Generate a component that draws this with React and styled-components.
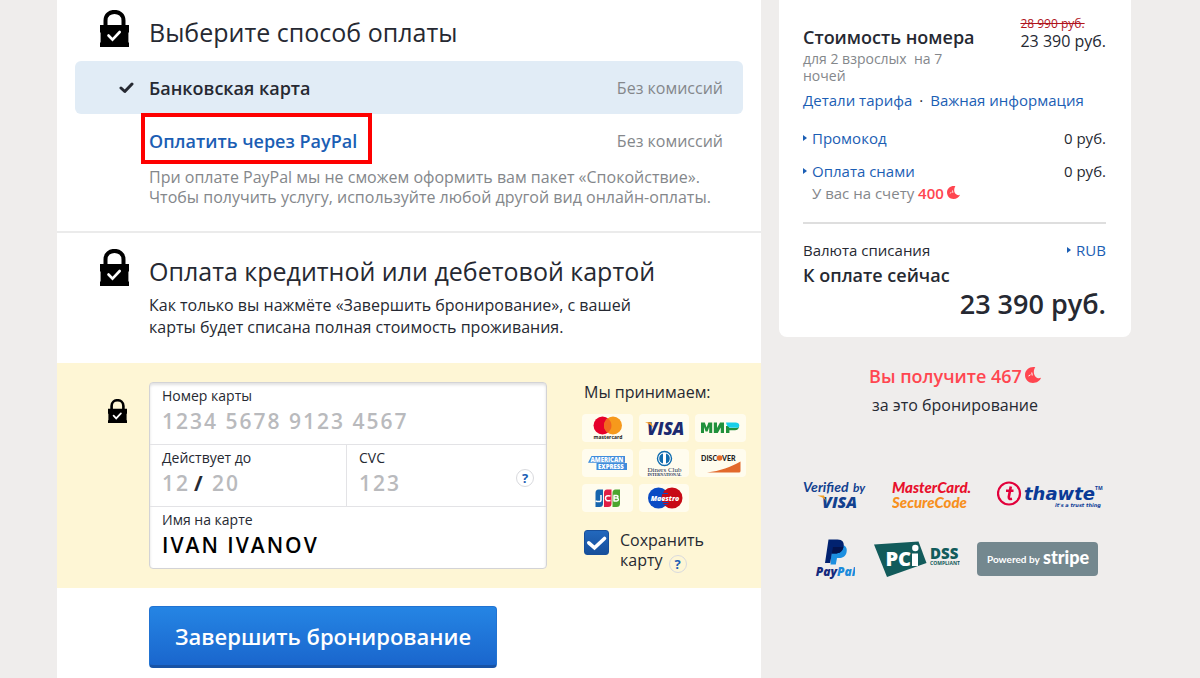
import React, { useState } from "react";
import styled, { createGlobalStyle } from "styled-components";

const GlobalStyle = createGlobalStyle`
  * {
    box-sizing: border-box;
  }

  body {
    margin: 0;
    background: #efedec;
    color: #262932;
    font-family: "Open Sans", "Noto Sans", sans-serif;
    font-size: 16px;
    line-height: 20px;
  }

  h2,
  h3,
  p {
    margin: 0;
  }

  a {
    color: #1b5eb4;
    text-decoration: none;
  }
`;

const brands = [
  "mastercard",
  "visa",
  "mir",
  "amex",
  "diners",
  "discover",
  "jcb",
  "maestro"
];

const App = () => {
  const [saveCard, setSaveCard] = useState(true);

  return (
    <>
      <GlobalStyle />
      <Page>
        <Main>
          <Section top={10} bottom={24}>
            <SectionHead>
              <LockIcon size={29} />
              <Title>Выберите способ оплаты</Title>
            </SectionHead>
            <Methods>
              <Method active>
                <CheckMark />
                <MethodName>Банковская карта</MethodName>
                <Fee>Без комиссий</Fee>
              </Method>
              <Method>
                <MethodLink href="#paypal">Оплатить через PayPal</MethodLink>
                <Fee>Без комиссий</Fee>
              </Method>
            </Methods>
            <Note>
              При оплате PayPal мы не сможем оформить вам пакет «Спокойствие».
              <br />
              Чтобы получить услугу, используйте любой другой вид онлайн-оплаты.
            </Note>
          </Section>

          <Section top={16} bottom={25} divided>
            <SectionHead>
              <LockIcon size={29} />
              <Title>Оплата кредитной или дебетовой картой</Title>
            </SectionHead>
            <Intro>
              Как только вы нажмёте «Завершить бронирование», с вашей карты
              будет списана полная стоимость проживания.
            </Intro>
          </Section>

          <CardSection>
            <SmallLock>
              <LockIcon size={19} />
            </SmallLock>
            <CardForm>
              <Field>
                <FieldLabel htmlFor="number">Номер карты</FieldLabel>
                <FieldInput id="number" placeholder="1234 5678 9123 4567" />
              </Field>
              <FieldRow>
                <Field>
                  <FieldLabel htmlFor="month">Действует до</FieldLabel>
                  <Expiry>
                    <ShortInput id="month" placeholder="12" />
                    <Slash>/</Slash>
                    <ShortInput aria-label="Год" placeholder="20" />
                  </Expiry>
                </Field>
                <CvcField>
                  <div>
                    <FieldLabel htmlFor="cvc">CVC</FieldLabel>
                    <FieldInput id="cvc" placeholder="123" />
                  </div>
                  <CvcHint type="button">?</CvcHint>
                </CvcField>
              </FieldRow>
              <Field>
                <FieldLabel htmlFor="holder">Имя на карте</FieldLabel>
                <FieldInput id="holder" defaultValue="IVAN IVANOV" />
              </Field>
            </CardForm>
            <Accept>
              <AcceptTitle>Мы принимаем:</AcceptTitle>
              <Brands>
                {brands.map(name => (
                  <Brand key={name}>
                    <BrandLogo name={name} />
                  </Brand>
                ))}
              </Brands>
              <SaveCard>
                <CheckboxWrap>
                  <Checkbox
                    id="save"
                    type="checkbox"
                    checked={saveCard}
                    onChange={e => setSaveCard(e.target.checked)}
                  />
                  {saveCard && <CheckboxTick />}
                </CheckboxWrap>
                <SaveText>
                  <label htmlFor="save">Сохранить карту</label>
                  <SaveHint type="button">?</SaveHint>
                </SaveText>
              </SaveCard>
            </Accept>
          </CardSection>

          <Submit type="submit">Завершить бронирование</Submit>
        </Main>

        <Aside>
          <Summary>
            <RoomCost>
              <div>
                <SummaryTitle>Стоимость номера</SummaryTitle>
                <Guests>для 2 взрослых &nbsp;на 7 ночей</Guests>
              </div>
              <div>
                <OldPrice>28 990 руб.</OldPrice>
                <Price>23 390 руб.</Price>
              </div>
            </RoomCost>
            <Links>
              <a href="#rate">Детали тарифа</a>
              <span>·</span>
              <a href="#info">Важная информация</a>
            </Links>
            <Line>
              <ToggleLink href="#promo">Промокод</ToggleLink>
              <span>0 руб.</span>
            </Line>
            <Line>
              <ToggleLink href="#dreams">Оплата снами</ToggleLink>
              <span>0 руб.</span>
            </Line>
            <Balance>
              У вас на счету <Dreams>400</Dreams>
              <MoonIcon size={13} />
            </Balance>
            <Divider />
            <Currency>
              <span>Валюта списания</span>
              <ToggleLink href="#currency">RUB</ToggleLink>
            </Currency>
            <SummaryTitle>К оплате сейчас</SummaryTitle>
            <Total>23 390 руб.</Total>
          </Summary>
          <Bonus>
            Вы получите 467
            <MoonIcon size={16} />
          </Bonus>
          <BonusNote>за это бронирование</BonusNote>
          <Trust>
            <VerifiedByVisa />
            <SecureCode />
            <Thawte />
          </Trust>
          <Trust inset>
            <PayPal />
            <PciDss />
            <Stripe />
          </Trust>
        </Aside>
      </Page>
    </>
  );
};

const LockIcon = ({ size }) => (
  <Icon width={size} viewBox="0 0 29 37">
    <path
      d="M5.5 16V10.500C5.500-1 23.500-1 23.500 10.500V16"
      fill="none"
      stroke="#000"
      strokeWidth="4"
    />
    <path d="M0 15h29v7l-.6 1v9l.6 1v4H0v-4l.6-1v-9L0 22z" fill="#000" />
    <path
      d="M8.500 25.500l4 4.200 7.200-7.700"
      fill="none"
      stroke="#fff"
      strokeWidth="2.600"
      strokeLinecap="round"
    />
  </Icon>
);

const CheckMark = () => (
  <CheckIcon width="15" viewBox="0 0 15 12">
    <path
      d="M2 6l3.800 3.500L13 2"
      fill="none"
      stroke="#262932"
      strokeWidth="3"
      strokeLinecap="round"
      strokeLinejoin="round"
    />
  </CheckIcon>
);

const CheckboxTick = () => (
  <Tick width="25" viewBox="0 0 25 25">
    <path
      d="M4.800 12.800l5.700 5L20.500 8.500"
      fill="none"
      stroke="#fff"
      strokeWidth="3.600"
      strokeLinecap="round"
    />
  </Tick>
);

const MoonIcon = ({ size }) => (
  <Moon width={size} viewBox="0 0 16 16">
    <path
      d="M10.300.3C5-.8 0 2.800 0 8c0 4.600 3.600 8 8 8 3.800 0 6.900-2 8-5.200-1.900.8-3.900.5-5.200-.9C8.500 7.600 8.100 3.500 10.300.3z"
      fill="#ff4650"
    />
    <path d="M3.500 9l2-1.200M6.800 5.500l.4 3" stroke="#fff" strokeWidth="1" />
  </Moon>
);

const BrandLogo = ({ name }) => {
  switch (name) {
    case "mastercard":
      return (
        <Icon width="50" viewBox="0 0 50 28">
          <circle cx="20.500" cy="11.500" r="9" fill="#e6002a" />
          <circle cx="31" cy="11.500" r="9" fill="#f6991c" />
          <path d="M25.750 4.200a9 9 0 0 1 0 14.600a9 9 0 0 1 0-14.600" fill="#f2661f" />
          <LogoText x="26" y="25" size={5} weight={700} fill="#222" anchor="middle">
            mastercard
          </LogoText>
        </Icon>
      );
    case "visa":
      return (
        <Icon width="50" viewBox="0 0 50 28">
          <LogoText x="8" y="20.500" size={17} weight={800} fill="#1c2a70" italic>
            VISA
          </LogoText>
          <path d="M6 8.300h6l2.500 6C12.500 11 9.500 9.300 6 8.300z" fill="#f49a20" />
        </Icon>
      );
    case "mir":
      return (
        <Icon width="50" viewBox="0 0 50 28">
          <path
            d="M6 19V8.500h3.800l1.800 5 1.800-5h3.800V19h-3v-6l-1.600 4.500h-2L9 13v6zM18.800 19V8.500H22V14l3-5.500h4V19h-3.200v-5.500l-3 5.500zM31 19v-7h3.400v2h6.300c1.500 0 2.700-.6 3.300-1.700-.1 2.800-1.600 4-4 4h-5.600V19z"
            fill="#21913c"
          />
          <path
            d="M31 8.500h9.500c2.300 0 3.800 1.200 3.800 2.900 0 1.500-1 2.300-2.500 2.300h-6.300C33.300 13.700 31.500 11.800 31 8.500z"
            fill="#18cfe8"
          />
        </Icon>
      );
    case "amex":
      return (
        <Icon width="50" viewBox="0 0 50 28">
          <path d="M6 13.800L9.500 7H43v6.800zM14.500 14H45v7H14.500z" fill="#3f8cdc" />
          <LogoText x="8.500" y="13" size={6} weight={800} fill="#fff">
            AMERICAN
          </LogoText>
          <LogoText x="16" y="20" size={6} weight={800} fill="#fff">
            EXPRESS
          </LogoText>
        </Icon>
      );
    case "diners":
      return (
        <Icon width="50" viewBox="0 0 50 28">
          <circle cx="25.500" cy="9.500" r="7" fill="#fff" stroke="#0f6cae" strokeWidth="1.400" />
          <path d="M24 4.500a5.200 5.200 0 0 0 0 10zM27 4.500a5.200 5.200 0 0 1 0 10z" fill="#0f6cae" />
          <LogoText x="25.500" y="22.500" size={7} weight={400} font="Liberation Serif" fill="#24304e" anchor="middle">
            Diners Club
          </LogoText>
          <LogoText x="25.500" y="26.500" size={4} weight={700} font="Liberation Serif" fill="#24304e" anchor="middle">
            INTERNATIONAL
          </LogoText>
        </Icon>
      );
    case "discover":
      return (
        <Icon width="50" viewBox="0 0 50 28">
          <LogoText x="22" y="11.500" size={7} weight={900} font="Lato" fill="#222" anchor="end">
            DISC
          </LogoText>
          <circle cx="24.500" cy="9" r="2.800" fill="#e66a28" />
          <LogoText x="27" y="11.500" size={7} weight={900} font="Lato" fill="#222">
            VER
          </LogoText>
          <path d="M12 23.500C25 22 36 18 45.500 12.500V22q0 1.500-1.500 1.500z" fill="#e2692c" />
        </Icon>
      );
    case "jcb":
      return (
        <Icon width="50" viewBox="0 0 50 28">
          <path d="M16.500 5.500H21V19.500q0 3.500-3.500 3.500h-4V9q0-3.500 3-3.500z" fill="#1765ad" />
          <path d="M25 5.500h4.500V19.500q0 3.500-3.500 3.500h-4V9q0-3.500 3-3.500z" fill="#e01f45" />
          <path d="M33.500 5.500H38V19.500q0 3.500-3.500 3.500h-4V9q0-3.500 3-3.500z" fill="#4ba62f" />
          <path
            d="M19 11v5q0 1.600-2 1.600t-3.500-.8M28.500 12q-5-1.200-5 2.200t5 2.200M31.500 11.500h3q1.500 0 1.500 1.200t-1.500 1.300h-3M31.500 14h3.300q1.600.1 1.600 1.500t-1.600 1.400h-3.300M32 11.500v5.400"
            fill="none"
            stroke="#fff"
            strokeWidth="1.500"
          />
        </Icon>
      );
    default:
      return (
        <Icon width="50" viewBox="0 0 50 28">
          <circle cx="19.500" cy="14" r="10.500" fill="#0a4bc4" />
          <circle cx="33" cy="14" r="10.500" fill="#c70a16" />
          <path d="M23 9.500h6M22.500 18.500h7M23.500 20.500h5" stroke="#0a4bc4" strokeWidth="1" />
          <LogoText x="26" y="16.500" size={7} weight={800} fill="#fff" anchor="middle" italic>
            Maestro
          </LogoText>
        </Icon>
      );
  }
};

const VerifiedByVisa = () => (
  <Icon width="64" viewBox="0 0 64 36">
    <LogoText x="0" y="15" size={14} weight={700} font="Lato" fill="#12418f" italic>
      Verified
    </LogoText>
    <LogoText x="50" y="15" size={12} weight={700} font="Lato" fill="#12418f" italic>
      by
    </LogoText>
    <LogoText x="19" y="31" size={16} weight={800} fill="#12418f" italic>
      VISA
    </LogoText>
    <path d="M14.500 18.500h6.500l2 5.500c-2-2.800-5-4.500-8.500-5.500z" fill="#f4a020" />
  </Icon>
);

const SecureCode = () => (
  <Icon width="80" viewBox="0 0 80 36">
    <LogoText x="0" y="16" size={15} weight={900} font="Lato" fill="#e8112d" italic>
      MasterCard.
    </LogoText>
    <LogoText x="0" y="31" size={15} weight={900} font="Lato" fill="#f7901e" italic>
      SecureCode
    </LogoText>
  </Icon>
);

const Thawte = () => (
  <Icon width="110" viewBox="0 0 110 36">
    <circle cx="12" cy="16.500" r="11" fill="none" stroke="#e2003b" strokeWidth="2.200" />
    <path
      d="M13.800 9.500l-2 10.500q-.3 2.600 3.200 1.800M9 13.800h7.500"
      fill="none"
      stroke="#e2003b"
      strokeWidth="2.600"
    />
    <LogoText x="27" y="23" size={18} weight={700} font="DejaVu Sans" fill="#0a3a96" italic>
      thawte
    </LogoText>
    <LogoText x="98" y="13" size={5} weight={700} fill="#0a3a96">
      TM
    </LogoText>
    <LogoText x="58" y="30" size={5} weight={700} font="DejaVu Sans" fill="#0a3a96" italic>
      it's a trust thing
    </LogoText>
  </Icon>
);

const PayPal = () => (
  <Icon width="40" viewBox="0 0 40 41">
    <path d="M17 6h10c4 .5 5.500 3.500 4.500 7.500-1 4-3.800 5.500-7.500 5.500h-2l-1.200 6.500h-5.300z" fill="#1c8fe0" />
    <path d="M13.500 0.500h9c5 0 7 3 6 7.500-1 4.500-4 6.500-8.500 6.500h-3.200L15.200 24H10z" fill="#012270" />
    <path d="M18 8h10.400c-.9 4.500-3.900 6.500-8.400 6.500h-3.100z" fill="#04144e" />
    <LogoText x="22" y="37" size={12} weight={800} fill="#15297c" anchor="end" italic>
      Pay
    </LogoText>
    <LogoText x="22" y="37" size={12} weight={800} fill="#1b8bdb" italic>
      Pal
    </LogoText>
  </Icon>
);

const PciDss = () => (
  <Icon width="88" viewBox="-2 0 88 36">
    <path d="M0 3.500L44.500.5l8 21.500L13 36z" fill="#125b5b" />
    <LogoText x="37" y="25" size={20} weight={800} fill="#fff" anchor="end">
      PC
    </LogoText>
    <path d="M38 12.500h6V25h-6z" fill="#fff" />
    <circle cx="41.300" cy="7" r="3.200" fill="#fff" />
    <LogoText x="56" y="18" size={15} weight={800} fill="#125b5b">
      DSS
    </LogoText>
    <LogoText x="56" y="24" size={5} weight={700} fill="#125b5b">
      COMPLIANT
    </LogoText>
  </Icon>
);

const Stripe = () => (
  <Icon width="121" viewBox="0 0 121 34">
    <rect width="121" height="34" rx="4" fill="#74888f" />
    <LogoText x="10" y="21" size={10} weight={700} font="Lato" fill="#fff">
      Powered by
    </LogoText>
    <LogoText x="66" y="22" size={18} weight={900} font="Lato" fill="#fff">
      stripe
    </LogoText>
  </Icon>
);

const Icon = styled.svg`
  display: block;
  flex: none;
`;

const CheckIcon = styled(Icon)`
  margin-right: 15px;
`;

const Moon = styled.svg`
  display: inline-block;
  margin-left: 3px;
`;

const LogoText = styled.text.attrs(({ anchor }) => ({ textAnchor: anchor }))`
  font-family: "${({ font }) => font || "Open Sans"}", sans-serif;
  font-size: ${({ size }) => size}px;
  font-weight: ${({ weight }) => weight || 600};
  font-style: ${({ italic }) => (italic ? "italic" : "normal")};
`;

const Page = styled.div`
  display: flex;
  align-items: stretch;
  gap: 18px;
  min-height: 100vh;
  padding: 0 69px 0 57px;
`;

const Main = styled.main`
  flex: 1;
  background: #fff;
`;

const Section = styled.section`
  padding: ${({ top, bottom }) => `${top}px 18px ${bottom}px`};
  border-top: ${({ divided }) => (divided ? "2px solid #ebebeb" : "none")};
`;

const SectionHead = styled.div`
  display: flex;
  align-items: flex-start;
  gap: 20px;
  padding-left: 25px;
`;

const Title = styled.h2`
  font-size: 25px;
  font-weight: 400;
  line-height: 45px;
`;

const Methods = styled.div`
  padding-top: 6px;
`;

const Method = styled.div`
  display: flex;
  align-items: center;
  height: 53px;
  padding: 0 20px 0 ${({ active }) => (active ? 44 : 74)}px;
  border-radius: 6px;
  background: ${({ active }) => (active ? "#e1ecf6" : "transparent")};
`;

const MethodName = styled.span`
  font-size: 18px;
  font-weight: 600;
`;

const MethodLink = styled.a`
  position: relative;
  font-size: 18px;
  font-weight: 600;

  &::after {
    content: "";
    position: absolute;
    inset: -18px -15px -13px -8px;
    border: 4px solid #fe0000;
  }
`;

const Fee = styled.span`
  margin-left: auto;
  color: #84878b;
`;

const Note = styled.p`
  padding-left: 74px;
  color: #84878b;
`;

const Intro = styled.p`
  max-width: 600px;
  padding-left: 74px;
  line-height: 22px;
`;

const CardSection = styled.section`
  display: flex;
  align-items: flex-start;
  padding: 19px 15px 18px 51px;
  background: #fef6d5;
`;

const SmallLock = styled.div`
  width: 41px;
  padding-top: 17px;
`;

const CardForm = styled.form`
  flex: 1;
  margin-right: 35px;
  border: 1px solid #d3d3d6;
  border-radius: 4px;
  background: #fff;
  box-shadow: inset 0 2px 3px rgba(0, 0, 0, 0.12);
`;

const FieldRow = styled.div`
  display: grid;
  grid-template-columns: 1fr 200px;
  border: solid #e3e3e6;
  border-width: 1px 0;
`;

const Field = styled.div`
  min-width: 0;
  padding: 4px 12px 6px;
`;

const CvcField = styled(Field)`
  display: flex;
  align-items: center;
  border-left: 1px solid #e3e3e6;
`;

const FieldLabel = styled.label`
  display: block;
  font-size: 14px;
  line-height: 17px;
`;

const FieldInput = styled.input`
  display: block;
  width: 100%;
  height: 34px;
  padding: 0;
  border: none;
  outline: none;
  background: transparent;
  color: #000;
  font-family: inherit;
  font-size: 21px;
  font-weight: 600;
  letter-spacing: 2px;

  &::placeholder {
    color: #b9babd;
    opacity: 1;
  }
`;

const ShortInput = styled(FieldInput)`
  width: 32px;
`;

const Expiry = styled.div`
  display: flex;
  align-items: center;
`;

const Slash = styled.span`
  width: 18px;
  font-size: 21px;
  font-weight: 700;
`;

const Hint = styled.button`
  flex: none;
  width: 18px;
  height: 18px;
  padding: 0;
  border: 1px solid #d9dade;
  border-radius: 50%;
  background: transparent;
  color: #1b5eb4;
  font-family: inherit;
  font-size: 13px;
  font-weight: 700;
  line-height: 16px;
  text-align: center;
`;

const CvcHint = styled(Hint)`
  margin-top: 6px;
`;

const SaveHint = styled(Hint)`
  margin-left: 6px;
  vertical-align: -3px;
`;

const Accept = styled.div`
  width: 164px;
`;

const AcceptTitle = styled.p`
  padding-left: 2px;
`;

const Brands = styled.div`
  display: grid;
  grid-template-columns: repeat(3, 1fr);
  gap: 7px 6px;
  padding-top: 12px;
`;

const Brand = styled.div`
  height: 28px;
  border-radius: 4px;
  background: #fffcee;
`;

const SaveCard = styled.div`
  display: flex;
  gap: 11px;
  height: 58px;
  padding: 18px 0 0 2px;
`;

const SaveText = styled.div`
  max-width: 100px;
`;

const CheckboxWrap = styled.div`
  display: grid;
  align-content: start;

  > * {
    grid-area: 1 / 1;
  }
`;

const Checkbox = styled.input`
  appearance: none;
  width: 25px;
  height: 25px;
  margin: 0;
  border: 1px solid #174f9b;
  border-radius: 3px;
  background: linear-gradient(#2268bd, #174f9b);
`;

const Tick = styled(Icon)`
  pointer-events: none;
`;

const Submit = styled.button`
  height: 62px;
  margin: 18px 0 10px 92px;
  padding: 0 25px;
  border: 1px solid #2173d2;
  border-bottom: 3px solid #1853a6;
  border-radius: 4px;
  background: linear-gradient(#2585e4, #1a66cd);
  color: #fff;
  font-family: inherit;
  font-size: 22px;
  font-weight: 600;
`;

const Aside = styled.aside`
  width: 352px;
`;

const Summary = styled.div`
  padding: 16px 25px 17px 24px;
  border-radius: 0 0 8px 8px;
  background: #fff;
  font-size: 15px;
`;

const RoomCost = styled.div`
  display: flex;
  justify-content: space-between;

  > :first-child {
    width: 180px;
    padding-top: 8px;
  }
`;

const SummaryTitle = styled.h3`
  font-size: 18px;
  font-weight: 600;
  line-height: 26px;
  white-space: nowrap;
`;

const Guests = styled.p`
  max-width: 150px;
  color: #84878b;
  font-size: 14px;
  line-height: 17px;
`;

const OldPrice = styled.del`
  display: block;
  color: #b0141c;
  font-size: 12px;
  line-height: 15px;
`;

const Price = styled.div`
  font-size: 16px;
`;

const Links = styled.div`
  display: flex;
  gap: 7px;
  padding-top: 6px;
  margin-bottom: 5px;
`;

const Line = styled.div`
  display: flex;
  justify-content: space-between;
  padding-top: 13px;
`;

const ToggleLink = styled.a`
  display: flex;
  align-items: center;
  gap: 5px;

  &::before {
    content: "";
    border: solid transparent;
    border-width: 3px 0 3px 4px;
    border-left-color: #1b5eb4;
  }
`;

const Balance = styled.p`
  padding: 2px 0 0 9px;
  color: #84878b;
`;

const Dreams = styled.span`
  color: #ff4650;
  font-weight: 600;
`;

const Divider = styled.hr`
  height: 2px;
  margin: 19px 0 16px;
  border: none;
  background: #dedede;
`;

const Currency = styled.div`
  display: flex;
  justify-content: space-between;
  padding-bottom: 2px;
`;

const Total = styled.div`
  font-size: 27px;
  font-weight: 600;
  line-height: 32px;
  text-align: right;
`;

const Bonus = styled.p`
  padding-top: 27px;
  color: #ff4650;
  font-size: 18px;
  font-weight: 600;
  line-height: 24px;
  text-align: center;
`;

const BonusNote = styled.p`
  padding: 7px 0 48px;
  text-align: center;
`;

const Trust = styled.div`
  display: flex;
  align-items: center;
  justify-content: space-between;
  height: 64px;
  padding: ${({ inset }) => (inset ? "0 33px 0 36px" : "0 24px")};
`;

export default App;
